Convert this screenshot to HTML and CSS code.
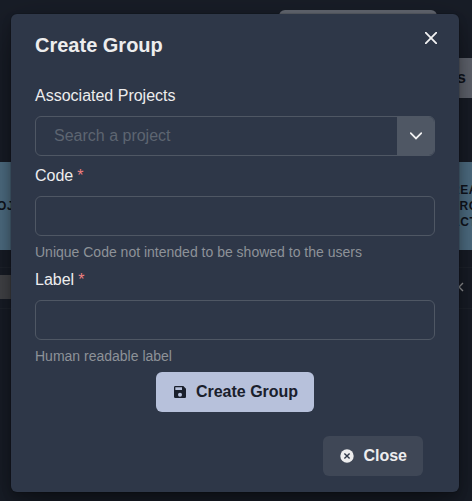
FILE: index.html
```html
<!DOCTYPE html>
<html lang="en">
<head>
<meta charset="utf-8">
<title>Create Group</title>
<link rel="stylesheet" href="styles.css">
</head>
<body>
<div class="page">
  <div class="topbar"></div>
  <div class="toolbar"><div class="action">s</div></div>
  <div class="table-head">
    <div class="head-left">OJ</div>
    <div class="head-right">REA<br>PRO<br>ACT</div>
  </div>
  <div class="row">
    <div class="chip"></div>
    <svg class="row-icon" viewBox="0 0 6 10"><path d="M5 1 1 5 5 9"/></svg>
  </div>
</div>
<section class="modal" role="dialog">
  <button class="dismiss" aria-label="Close"><svg viewBox="0 0 12 12"><path d="m.7.7 10.6 10.6M11.3.7.7 11.3"/></svg></button>
  <header class="modal-header">Create Group</header>
  <form class="modal-body">
    <div class="field">
      <label>Associated Projects</label>
      <div class="select">
        <input class="search" type="text" placeholder="Search a project">
        <span class="toggle"><svg viewBox="0 0 12 8"><path d="m.7 1.2 5.3 5.2 5.3-5.2"/></svg></span>
      </div>
    </div>
    <div class="field">
      <label>Code<span class="required">*</span></label>
      <input class="input" type="text">
      <div class="hint">Unique Code not intended to be showed to the users</div>
    </div>
    <div class="field">
      <label>Label<span class="required">*</span></label>
      <input class="input" type="text">
      <div class="hint">Human readable label</div>
    </div>
    <button class="btn primary" type="button"><svg class="icon" viewBox="0 0 24 24"><path d="M17 3H5a2 2 0 0 0-2 2v14a2 2 0 0 0 2 2h14c1.100 0 2-.9 2-2V7l-4-4zm-5 16a3 3 0 1 1 0-6 3 3 0 0 1 0 6zm3-10H5V5h10v4z"/></svg>Create Group</button>
  </form>
  <footer class="modal-footer">
    <button class="btn secondary" type="button"><svg class="icon" viewBox="0 0 16 16"><circle cx="8" cy="8" r="6.700"/><path class="cross" d="m5.400 5.400 5.200 5.200M10.600 5.400l-5.200 5.200"/></svg>Close</button>
  </footer>
</section>
</body>
</html>
```
FILE: styles.css
```css
* { box-sizing: border-box; }
body {
  margin: 0;
  height: 501px;
  overflow: hidden;
  background: #181d27;
  font: 16px/24px "Liberation Sans", Arial, sans-serif;
  color: #ededee;
}
button, input { font: inherit; color: inherit; }
.page { height: 501px; padding-top: 10px; color: #10141d; font-weight: 700; }
.topbar { width: 158px; height: 40px; margin-left: 279px; border-radius: 6px; background: #646872; }
.toolbar { display: flex; justify-content: flex-end; padding-top: 8px; }
.action { width: 60px; height: 40px; padding-right: 6px; text-align: right; line-height: 40px; background: #626670; }
.table-head {
  display: flex;
  justify-content: space-between;
  align-items: center;
  height: 88px;
  margin-top: 64px;
  background: #507086;
  font-size: 12px;
  line-height: 16px;
  letter-spacing: .6px;
}
.head-left { margin-left: -3px; }
.head-right { width: 21px; white-space: nowrap; }
.row {
  display: flex;
  justify-content: space-between;
  align-items: center;
  height: 42px;
  margin-top: 17px;
  border-top: 1px solid #1e232c;
  border-bottom: 1px solid #1e232c;
}
.chip { width: 40px; height: 24px; margin-bottom: 2px; background: #444549; }
.row-icon { width: 6px; height: 10px; margin-right: 8px; margin-bottom: 2px; fill: none; stroke: #96989a; stroke-width: 1.4; }
.modal {
  position: absolute;
  top: 14px;
  left: 11px;
  width: 448px;
  height: 478px;
  border-radius: 6px;
  background: #2e3748;
  box-shadow: 0 0 0 1px rgba(0,0,0,.1), 0 5px 10px rgba(0,0,0,.2), 0 15px 40px rgba(0,0,0,.4);
}
.dismiss {
  position: absolute;
  top: 8px;
  right: 12px;
  display: flex;
  align-items: center;
  justify-content: center;
  width: 32px;
  height: 32px;
  padding: 0;
  border: 0;
  background: none;
}
.dismiss svg { width: 12px; height: 12px; fill: none; stroke: #f1f1f2; stroke-width: 1.8; stroke-linecap: round; }
.modal-header { padding: 16px 24px; font-size: 20px; line-height: 30px; font-weight: 700; }
.modal-body { display: flex; flex-direction: column; gap: 8px; padding: 8px 24px; }
.field label { display: block; margin-bottom: 8px; }
.required { margin-left: 4px; color: #f08080; }
.select { display: flex; height: 40px; border: 1px solid #4f5764; border-radius: 6px; overflow: hidden; }
.search { flex: 1; min-width: 0; padding: 0 18px; border: 0; outline: 0; background: none; }
.search::placeholder { color: #5d6571; opacity: 1; }
.toggle { display: flex; align-items: center; justify-content: center; width: 37px; background: #4f5764; }
.toggle svg { width: 12px; height: 8px; fill: none; stroke: #f1f1f2; stroke-width: 1.8; stroke-linecap: round; }
.input { display: block; width: 100%; height: 40px; padding: 0 16px; border: 1px solid #4f5764; border-radius: 6px; background: none; outline: 0; }
.hint { height: 16px; margin-top: 8px; font-size: 14px; line-height: 16px; color: #8d9298; }
.btn { display: flex; align-items: center; gap: 8px; height: 40px; padding: 0 16px; border: 0; border-radius: 6px; font-weight: 700; }
.primary { align-self: center; background: #b7c1db; color: #1a202c; }
.secondary { margin-right: 12px; background: #3f4756; }
.icon { width: 16px; height: 16px; fill: currentColor; }
.cross { fill: none; stroke: #2e3748; stroke-width: 1.4; }
.modal-footer { display: flex; justify-content: flex-end; padding: 16px 24px; }
```
